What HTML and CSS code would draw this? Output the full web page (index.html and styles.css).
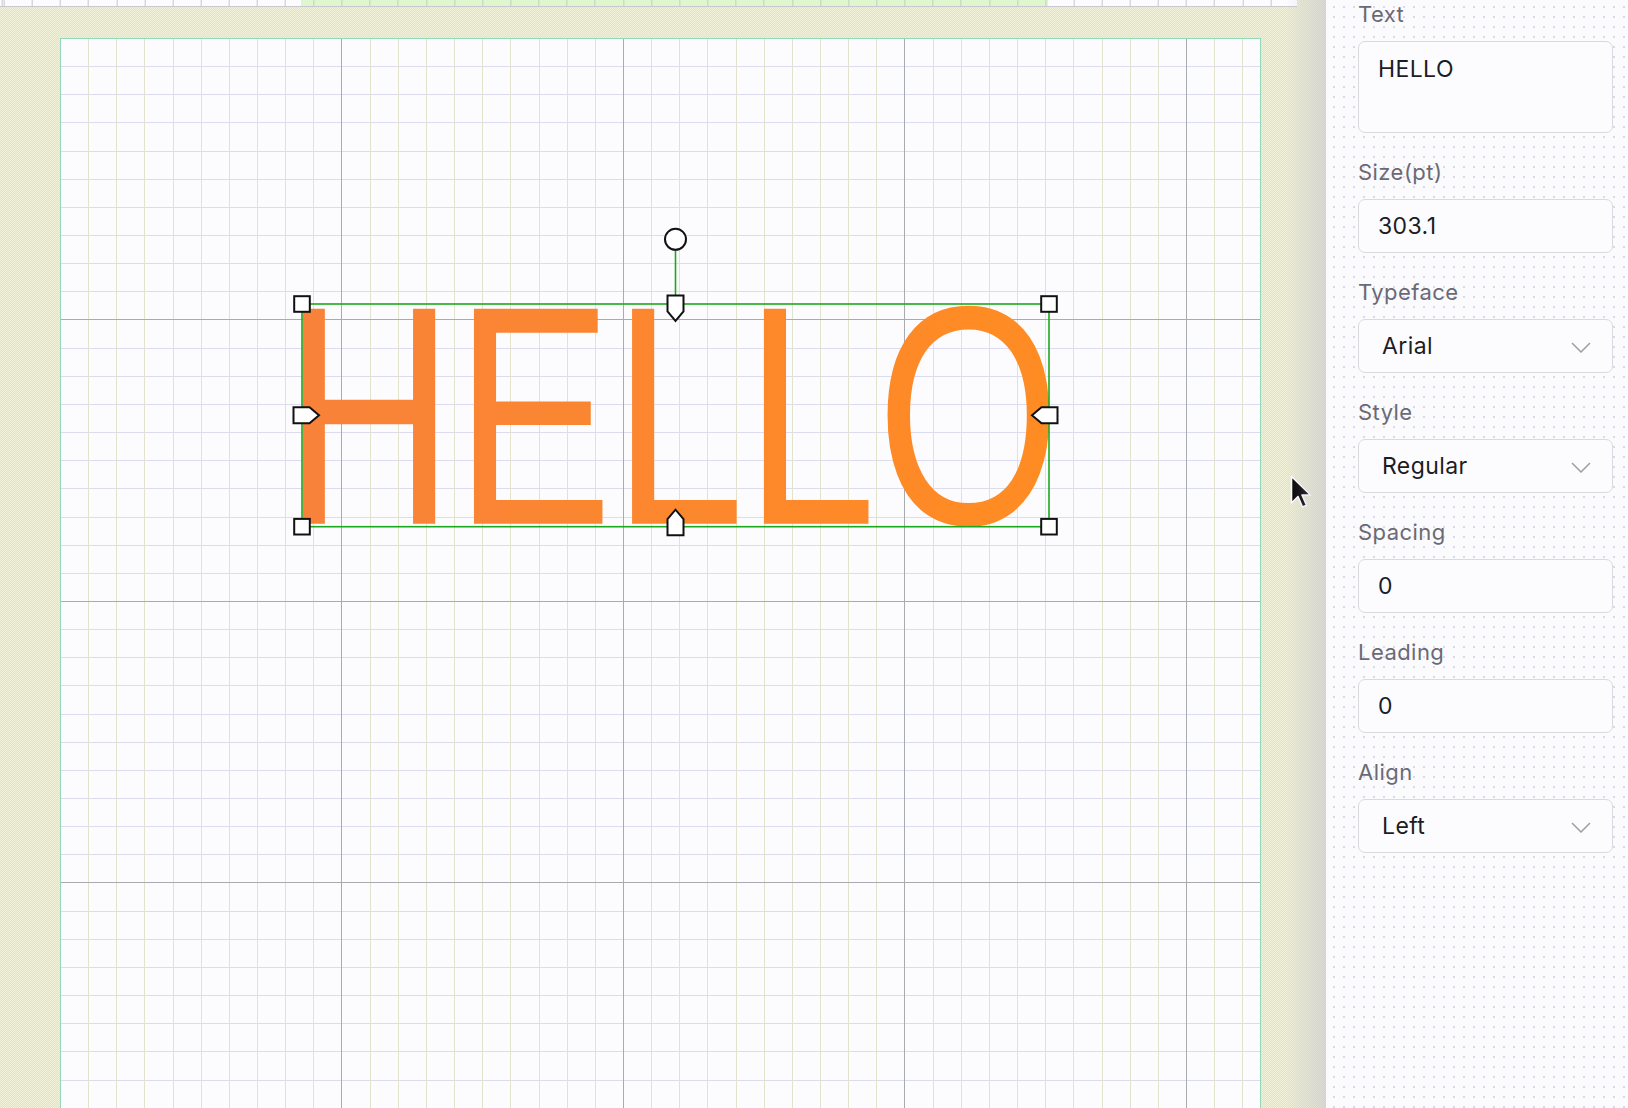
FILE: index.html
```html
<!DOCTYPE html>
<html lang="en">
<head>
<meta charset="utf-8">
<title>Text editor</title>
<link rel="stylesheet" href="styles.css">
</head>
<body>
<div class="app">
  <main class="stage">
    <div class="ruler"><span class="ruler-sel"></span></div>
    <div class="page">
      <svg class="artboard" width="1201" height="700" viewBox="0 0 1201 700">
        <defs>
          <linearGradient id="ink" x1="0" y1="0" x2="1" y2="0">
            <stop offset="0" stop-color="#f8823a"/>
            <stop offset="1" stop-color="#ff8c22"/>
          </linearGradient>
        </defs>
        <text class="art-text" transform="translate(223.3 485.7) scale(0.785 1.034)" fill="url(#ink)">HELLO</text>

        <!-- selection frame -->
        <rect class="sel-frame" x="242" y="266" width="747" height="222.7"/>
        <line class="sel-frame" x1="615.5" y1="212" x2="615.5" y2="258"/>
        <circle class="handle" cx="615.5" cy="201.3" r="10.5"/>

        <rect class="handle" x="234.2" y="258.2" width="15.6" height="15.6"/>
        <rect class="handle" x="981.2" y="258.2" width="15.6" height="15.6"/>
        <rect class="handle" x="234.2" y="480.9" width="15.6" height="15.6"/>
        <rect class="handle" x="981.2" y="480.9" width="15.6" height="15.6"/>

        <path class="handle" transform="translate(615.5 266)" d="M-8 -8.5 H8 V7.5 L0 17 L-8 7.5 Z"/>
        <path class="handle" transform="translate(615.5 488.7) rotate(180)" d="M-8 -8.5 H8 V7.5 L0 17 L-8 7.5 Z"/>
        <path class="handle" transform="translate(242 377.3) rotate(-90)" d="M-8 -8.5 H8 V7.5 L0 17 L-8 7.5 Z"/>
        <path class="handle" transform="translate(989 377.3) rotate(90)" d="M-8 -8.5 H8 V7.5 L0 17 L-8 7.5 Z"/>
      </svg>
    </div>
    <svg class="cursor" width="24" height="36" viewBox="0 0 24 36">
      <path d="M1.5 1.5 V28 L8 21.5 L12.5 32 L16.5 30.3 L12 20 H20.5 Z" fill="#000" stroke="#fff" stroke-width="1.6" stroke-linejoin="round"/>
    </svg>
  </main>

  <aside class="inspector">
    <div class="field">
      <div class="field-label">Text</div>
      <div class="box textarea">HELLO</div>
    </div>
    <div class="field">
      <div class="field-label">Size(pt)</div>
      <div class="box input">303.1</div>
    </div>
    <div class="field">
      <div class="field-label">Typeface</div>
      <div class="box select"><span>Arial</span><svg class="chevron" width="20" height="11" viewBox="0 0 20 11"><path d="M1 1 L10 10 L19 1"/></svg></div>
    </div>
    <div class="field">
      <div class="field-label">Style</div>
      <div class="box select"><span>Regular</span><svg class="chevron" width="20" height="11" viewBox="0 0 20 11"><path d="M1 1 L10 10 L19 1"/></svg></div>
    </div>
    <div class="field">
      <div class="field-label">Spacing</div>
      <div class="box input">0</div>
    </div>
    <div class="field">
      <div class="field-label">Leading</div>
      <div class="box input">0</div>
    </div>
    <div class="field">
      <div class="field-label">Align</div>
      <div class="box select"><span>Left</span><svg class="chevron" width="20" height="11" viewBox="0 0 20 11"><path d="M1 1 L10 10 L19 1"/></svg></div>
    </div>
  </aside>
</div>
</body>
</html>
```

FILE: styles.css
```css
html, body {
  margin: 0;
  padding: 0;
}

body {
  font-family: Inter, "Noto Sans", "Liberation Sans", sans-serif;
  overflow: hidden;
  background: #fbfbfd;
}

.app {
  display: flex;
  width: 1628px;
  height: 1108px;
}

/* ---------- canvas area ---------- */

.stage {
  position: relative;
  flex: none;
  width: 1326px;
  height: 1108px;
  overflow: hidden;
  background-color: #e8e8ec;
  background-image: repeating-conic-gradient(#dcdcf5 0 25%, #f1f1d9 0 50%);
  background-size: 2px 2px;
}

/* soft shade where the canvas meets the inspector */
.stage::after {
  content: "";
  position: absolute;
  top: 0;
  right: 0;
  width: 40px;
  height: 100%;
  background: linear-gradient(90deg, rgba(200, 200, 220, 0), rgba(184, 184, 206, 0.4));
  pointer-events: none;
}

.ruler {
  display: flex;
  width: 1297px;
  height: 6px;
  border-bottom: 1px solid #c8c8ce;
  background-color: #fcfcfe;
  background-image: repeating-linear-gradient(90deg, #c6c6cc 0 1px, transparent 1px 28.15px);
  background-position: 3.7px 0;
}

.ruler-sel {
  margin-left: 301px;
  width: 747px;
  height: 100%;
  background-color: #def7cf;
  background-image: repeating-linear-gradient(90deg, #c3cfbf 0 1px, transparent 1px 28.15px);
  background-position: 12.35px 0;
}

.page {
  position: relative;
  margin-left: 60px;
  margin-top: 31px;
  width: 1199px;
  height: 1070px;
  border: 1px solid #93d8b8;
  border-bottom: none;
  background-color: #fcfcfe;
  background-origin: border-box;
  background-image:
    repeating-linear-gradient(90deg, #aaaab1 0 1px, transparent 1px 281.5px),
    repeating-linear-gradient(180deg, #aaaab1 0 1px, transparent 1px 281.5px),
    repeating-linear-gradient(90deg, #e2e2cd 0 1px, transparent 1px 28.15px),
    repeating-linear-gradient(180deg, #dcdcf0 0 1px, transparent 1px 28.15px);
}

.artboard {
  position: absolute;
  left: -1px;
  top: -1px;
  overflow: visible;
}

.art-text {
  font-family: "Liberation Sans", Arial, sans-serif;
  font-size: 302px;
}

.sel-frame {
  fill: none;
  stroke: #1ca81c;
  stroke-width: 1.6;
}

.handle {
  fill: #ffffff;
  stroke: #111111;
  stroke-width: 2;
  stroke-linejoin: miter;
}

.cursor {
  position: absolute;
  left: 1290px;
  top: 475px;
}

/* ---------- inspector ---------- */

.inspector {
  flex: none;
  width: 255px;
  padding: 0 15px 0 32px;
  background-color: #fbfbfd;
  background-image: radial-gradient(circle, #d8d8ee 0 0.8px, transparent 1.2px);
  background-size: 10px 10px;
  background-position: 3px 2px;
}

.field {
  margin-bottom: 25px;
}

.field-label {
  height: 28px;
  margin-bottom: 13px;
  font-size: 22px;
  letter-spacing: 0.45px;
  line-height: 28px;
  color: #6a6a76;
}

.box {
  box-sizing: border-box;
  border: 1px solid #d9d9de;
  border-radius: 7px;
  background: #fcfcfe;
  color: #1c1c24;
  font-size: 23px;
  letter-spacing: 0.4px;
  line-height: 30px;
}

.textarea {
  height: 92px;
  padding: 12px 19px;
}

.input {
  height: 54px;
  padding: 11px 19px;
}

.select {
  display: flex;
  align-items: center;
  justify-content: space-between;
  height: 54px;
  padding: 0 21px 0 23px;
}

.chevron {
  display: block;
  margin-top: 2px;
}

.chevron path {
  fill: none;
  stroke: #9d9da6;
  stroke-width: 1.5;
}
```
